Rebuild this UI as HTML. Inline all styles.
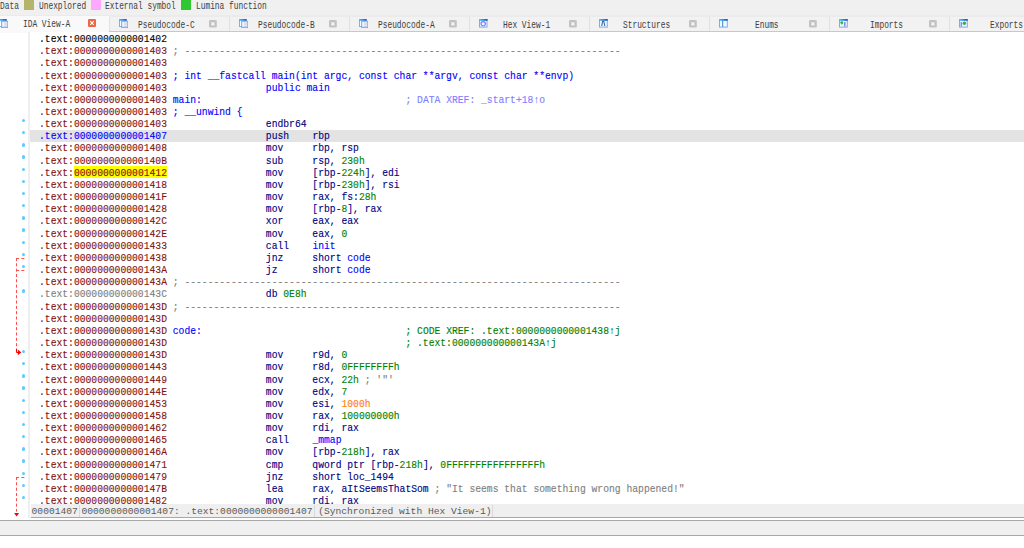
<!DOCTYPE html>
<html><head><meta charset="utf-8"><style>
html,body{margin:0;padding:0}
body{width:1024px;height:548px;overflow:hidden;position:relative;background:#fff;font-family:"Liberation Mono",monospace}
.abs{position:absolute}
#legend{position:absolute;left:0;top:0;width:1024px;height:15px;background:#f0f0f0}
.lt{position:absolute;top:0.5px;font-size:10.4px;line-height:10px;color:#404040;white-space:pre;transform-origin:0 0;transform:scaleX(0.7564)}
.sq{position:absolute;top:-1px;height:11px;width:10px}
#tabs{position:absolute;left:0;top:15px;width:1024px;height:17px;background:linear-gradient(#ebebeb 0,#ebebeb 2px,#f2f2f2 2px)}
#tabline{position:absolute;left:109px;top:31px;width:915px;height:1px;background:#c8c8c8}
.tab{position:absolute;top:16px;height:15px;width:120px}
.tsep{position:absolute;top:17px;height:14px;width:1px;background:#e2e2e2}
.tt{position:absolute;top:19.5px;font-size:10.4px;line-height:10px;color:#404040;white-space:pre;transform-origin:0 0;transform:scaleX(0.7564)}
.ico{position:absolute;top:19.5px;width:8px;height:8px}
.cls{position:absolute;top:21px;width:7px;height:7px;background:#c8c8c8}
#code{position:absolute;left:30.25px;top:32px;width:994px;height:472px;background:#fff;overflow:hidden}
#strip{position:absolute;left:28.1px;top:32px;width:2.2px;height:486px;background:#efefef}
.r{position:absolute;left:8.75px;font-size:10.5px;line-height:12.16px;white-space:pre;height:12.16px;transform-origin:0 0;transform:scaleX(0.9230);-webkit-text-stroke:0.12px currentColor}
#hl{position:absolute;left:0;top:97.50px;width:994px;height:12px;background:#e3e3e3}
.dot{position:absolute;left:22.2px;width:3.3px;height:3.3px;border-radius:50%;background:#5ccbff}
#status{position:absolute;left:31px;top:504px;width:993px;height:13px;background:#efefef}
.st{position:absolute;top:504.8px;font-size:9.63px;line-height:13px;color:#5a5a5a;white-space:pre}
</style></head><body>
<div id="legend"></div>
<div class="lt" style="left:0px">Data</div>
<div class="sq" style="left:24px;background:#b4b46c"></div>
<div class="lt" style="left:38.7px">Unexplored</div>
<div class="sq" style="left:91px;background:#ffa8ff"></div>
<div class="lt" style="left:105.3px">External symbol</div>
<div class="sq" style="left:181px;background:#30c830"></div>
<div class="lt" style="left:195.8px">Lumina function</div>
<div id="tabs"></div>
<div id="tabline"></div>
<div class="tab" style="left:-10.8px;background:#f9f9f9;height:17px"></div>
<svg class="abs" style="left:-1.1px;top:19.3px" width="9" height="9" viewBox="0 0 9 9"><defs><linearGradient id="g0" x1="0" x2="1" y1="0" y2="0"><stop offset="0" stop-color="#3cd0f8"/><stop offset="1" stop-color="#1f48d0"/></linearGradient></defs><rect x="0.5" y="0.5" width="6.8" height="7" fill="#e8f6ff" stroke="#7eaef0" stroke-width="1"/><rect x="0" y="0" width="7.5" height="1.8" fill="url(#g0)"/><rect x="1.2" y="2" width="1" height="5" fill="#fff"/><rect x="2.6" y="2.2" width="6.2" height="6.4" fill="#c9d6ea" stroke="#8aa3c8" stroke-width="0.8"/><rect x="3.6" y="3.2" width="1.2" height="4.2" fill="#fff"/><rect x="5.2" y="3.4" width="2.6" height="1.1" fill="#e8f0ff"/><rect x="5.2" y="5.6" width="2.6" height="1.1" fill="#e8f0ff"/></svg>
<div class="tt" style="left:23.1px;top:18.7px">IDA View-A</div>
<svg class="abs" style="left:88.1px;top:19px" width="8" height="8" viewBox="0 0 8 8"><rect x="0" y="0" width="8" height="8" rx="1.2" fill="#e9683f"/><path d="M2.2 2.2 L5.8 5.8 M5.8 2.2 L2.2 5.8" stroke="#fff" stroke-width="1.1"/></svg>
<div class="tsep" style="left:109.2px"></div>
<svg class="abs" style="left:118.9px;top:19.3px" width="9" height="9" viewBox="0 0 9 9"><defs><linearGradient id="g1" x1="0" x2="1" y1="0" y2="0"><stop offset="0" stop-color="#3cd0f8"/><stop offset="1" stop-color="#1f48d0"/></linearGradient></defs><rect x="0.5" y="0.5" width="6.8" height="7" fill="#e8f6ff" stroke="#7eaef0" stroke-width="1"/><rect x="0" y="0" width="7.5" height="1.8" fill="url(#g1)"/><rect x="1.2" y="2" width="1" height="5" fill="#fff"/><rect x="2.6" y="2.2" width="6.2" height="6.4" fill="#c9d6ea" stroke="#8aa3c8" stroke-width="0.8"/><rect x="3.6" y="3.2" width="1.2" height="4.2" fill="#fff"/><rect x="5.2" y="3.4" width="2.6" height="1.1" fill="#e8f0ff"/><rect x="5.2" y="5.6" width="2.6" height="1.1" fill="#e8f0ff"/></svg>
<div class="tt" style="left:138.4px">Pseudocode-C</div>
<svg class="abs" style="left:209.1px;top:20.3px" width="7.8" height="7.6" viewBox="0 0 7.8 7.6"><rect x="0" y="0" width="7.8" height="7.6" rx="1.4" fill="#c2c2c2"/><path d="M2.4 2.3 L5.4 5.3 M5.4 2.3 L2.4 5.3" stroke="#fff" stroke-width="1.1"/></svg>
<div class="tsep" style="left:229.2px"></div>
<svg class="abs" style="left:238.9px;top:19.3px" width="9" height="9" viewBox="0 0 9 9"><defs><linearGradient id="g2" x1="0" x2="1" y1="0" y2="0"><stop offset="0" stop-color="#3cd0f8"/><stop offset="1" stop-color="#1f48d0"/></linearGradient></defs><rect x="0.5" y="0.5" width="6.8" height="7" fill="#e8f6ff" stroke="#7eaef0" stroke-width="1"/><rect x="0" y="0" width="7.5" height="1.8" fill="url(#g2)"/><rect x="1.2" y="2" width="1" height="5" fill="#fff"/><rect x="2.6" y="2.2" width="6.2" height="6.4" fill="#c9d6ea" stroke="#8aa3c8" stroke-width="0.8"/><rect x="3.6" y="3.2" width="1.2" height="4.2" fill="#fff"/><rect x="5.2" y="3.4" width="2.6" height="1.1" fill="#e8f0ff"/><rect x="5.2" y="5.6" width="2.6" height="1.1" fill="#e8f0ff"/></svg>
<div class="tt" style="left:258.4px">Pseudocode-B</div>
<svg class="abs" style="left:329.1px;top:20.3px" width="7.8" height="7.6" viewBox="0 0 7.8 7.6"><rect x="0" y="0" width="7.8" height="7.6" rx="1.4" fill="#c2c2c2"/><path d="M2.4 2.3 L5.4 5.3 M5.4 2.3 L2.4 5.3" stroke="#fff" stroke-width="1.1"/></svg>
<div class="tsep" style="left:349.2px"></div>
<svg class="abs" style="left:358.9px;top:19.3px" width="9" height="9" viewBox="0 0 9 9"><defs><linearGradient id="g3" x1="0" x2="1" y1="0" y2="0"><stop offset="0" stop-color="#3cd0f8"/><stop offset="1" stop-color="#1f48d0"/></linearGradient></defs><rect x="0.5" y="0.5" width="6.8" height="7" fill="#e8f6ff" stroke="#7eaef0" stroke-width="1"/><rect x="0" y="0" width="7.5" height="1.8" fill="url(#g3)"/><rect x="1.2" y="2" width="1" height="5" fill="#fff"/><rect x="2.6" y="2.2" width="6.2" height="6.4" fill="#c9d6ea" stroke="#8aa3c8" stroke-width="0.8"/><rect x="3.6" y="3.2" width="1.2" height="4.2" fill="#fff"/><rect x="5.2" y="3.4" width="2.6" height="1.1" fill="#e8f0ff"/><rect x="5.2" y="5.6" width="2.6" height="1.1" fill="#e8f0ff"/></svg>
<div class="tt" style="left:378.4px">Pseudocode-A</div>
<svg class="abs" style="left:449.1px;top:20.3px" width="7.8" height="7.6" viewBox="0 0 7.8 7.6"><rect x="0" y="0" width="7.8" height="7.6" rx="1.4" fill="#c2c2c2"/><path d="M2.4 2.3 L5.4 5.3 M5.4 2.3 L2.4 5.3" stroke="#fff" stroke-width="1.1"/></svg>
<div class="tsep" style="left:469.2px"></div>
<svg class="abs" style="left:478.9px;top:19.3px" width="9" height="9" viewBox="0 0 9 9"><defs><linearGradient id="g4" x1="0" x2="1" y1="0" y2="0"><stop offset="0" stop-color="#3cd0f8"/><stop offset="1" stop-color="#1f48d0"/></linearGradient></defs><rect x="0.5" y="0.5" width="7.5" height="7.6" fill="#eef8ff" stroke="#86a8ea" stroke-width="1"/><rect x="0" y="0" width="8.5" height="1.8" fill="url(#g4)"/><circle cx="4.2" cy="4.8" r="2.2" fill="none" stroke="#7a7af8" stroke-width="1.2"/></svg>
<div class="tt" style="left:503.1px">Hex View-1</div>
<svg class="abs" style="left:569.1px;top:20.3px" width="7.8" height="7.6" viewBox="0 0 7.8 7.6"><rect x="0" y="0" width="7.8" height="7.6" rx="1.4" fill="#c2c2c2"/><path d="M2.4 2.3 L5.4 5.3 M5.4 2.3 L2.4 5.3" stroke="#fff" stroke-width="1.1"/></svg>
<div class="tsep" style="left:589.2px"></div>
<svg class="abs" style="left:598.9px;top:19.3px" width="9" height="9" viewBox="0 0 9 9"><defs><linearGradient id="g5" x1="0" x2="1" y1="0" y2="0"><stop offset="0" stop-color="#3cd0f8"/><stop offset="1" stop-color="#1f48d0"/></linearGradient></defs><rect x="0.5" y="0.5" width="7.8" height="7.6" fill="#eef8ff" stroke="#86a8ea" stroke-width="1"/><rect x="0" y="0" width="8.6" height="1.8" fill="url(#g5)"/><path d="M2.7 7 L3.6 2.4 L4.8 2.4 L5.8 7" fill="none" stroke="#3a6aa0" stroke-width="1.1"/></svg>
<div class="tt" style="left:623.1px">Structures</div>
<svg class="abs" style="left:689.1px;top:20.3px" width="7.8" height="7.6" viewBox="0 0 7.8 7.6"><rect x="0" y="0" width="7.8" height="7.6" rx="1.4" fill="#c2c2c2"/><path d="M2.4 2.3 L5.4 5.3 M5.4 2.3 L2.4 5.3" stroke="#fff" stroke-width="1.1"/></svg>
<div class="tsep" style="left:709.2px"></div>
<svg class="abs" style="left:718.9px;top:19.3px" width="9" height="9" viewBox="0 0 9 9"><defs><linearGradient id="g6" x1="0" x2="1" y1="0" y2="0"><stop offset="0" stop-color="#3cd0f8"/><stop offset="1" stop-color="#1f48d0"/></linearGradient></defs><rect x="0.5" y="0.5" width="7.8" height="7.6" fill="#eefaff" stroke="#86a8ea" stroke-width="1"/><rect x="0" y="0" width="8.6" height="1.8" fill="url(#g6)"/><rect x="3.2" y="1.5" width="1" height="6.5" fill="#3a8ad0"/></svg>
<div class="tt" style="left:754.9px">Enums</div>
<svg class="abs" style="left:809.1px;top:20.3px" width="7.8" height="7.6" viewBox="0 0 7.8 7.6"><rect x="0" y="0" width="7.8" height="7.6" rx="1.4" fill="#c2c2c2"/><path d="M2.4 2.3 L5.4 5.3 M5.4 2.3 L2.4 5.3" stroke="#fff" stroke-width="1.1"/></svg>
<div class="tsep" style="left:829.2px"></div>
<svg class="abs" style="left:838.9px;top:19.3px" width="9" height="9" viewBox="0 0 9 9"><defs><linearGradient id="g7" x1="0" x2="1" y1="0" y2="0"><stop offset="0" stop-color="#3cd0f8"/><stop offset="1" stop-color="#1f48d0"/></linearGradient></defs><rect x="0.5" y="0.5" width="7.8" height="7.6" fill="#eef8ff" stroke="#86a8ea" stroke-width="1"/><rect x="0" y="0" width="8.6" height="1.8" fill="url(#g7)"/><rect x="5" y="3" width="1.6" height="4.6" fill="#8a90e0"/><path d="M1.3 2.5 L4.4 5 L2.2 5.6 Z" fill="#2cb83c"/><circle cx="2.8" cy="3.6" r="1.3" fill="#2cb83c"/></svg>
<div class="tt" style="left:870.2px">Imports</div>
<svg class="abs" style="left:929.1px;top:20.3px" width="7.8" height="7.6" viewBox="0 0 7.8 7.6"><rect x="0" y="0" width="7.8" height="7.6" rx="1.4" fill="#c2c2c2"/><path d="M2.4 2.3 L5.4 5.3 M5.4 2.3 L2.4 5.3" stroke="#fff" stroke-width="1.1"/></svg>
<div class="tsep" style="left:949.2px"></div>
<svg class="abs" style="left:959.4px;top:19.3px" width="9" height="9" viewBox="0 0 9 9"><defs><linearGradient id="g8" x1="0" x2="1" y1="0" y2="0"><stop offset="0" stop-color="#3cd0f8"/><stop offset="1" stop-color="#1f48d0"/></linearGradient></defs><rect x="0.5" y="0.5" width="7.8" height="7.6" fill="#eef8ff" stroke="#86a8ea" stroke-width="1"/><rect x="0" y="0" width="8.6" height="1.8" fill="url(#g8)"/><rect x="1.5" y="3" width="1.6" height="4.6" fill="#8a90e0"/><circle cx="5.4" cy="4.2" r="1.7" fill="#2cb83c"/></svg>
<div class="tt" style="left:990.2px">Exports</div>
<svg class="abs" style="left:1049.1px;top:20.3px" width="7.8" height="7.6" viewBox="0 0 7.8 7.6"><rect x="0" y="0" width="7.8" height="7.6" rx="1.4" fill="#c2c2c2"/><path d="M2.4 2.3 L5.4 5.3 M5.4 2.3 L2.4 5.3" stroke="#fff" stroke-width="1.1"/></svg>
<div id="strip"></div>
<div id="code">
<div id="hl"></div>
<div class="abs" style="left:43.85px;top:134.0px;width:92.9px;height:12.2px;background:#ffff00"></div>
<div class="r" style="top:1.04px"><span style="color:#000000">.text:0000000000001402</span></div>
<div class="r" style="top:13.20px"><span style="color:#841212">.text:0000000000001403</span> <span style="color:#808080">; ---------------------------------------------------------------------------</span></div>
<div class="r" style="top:25.36px"><span style="color:#841212">.text:0000000000001403</span></div>
<div class="r" style="top:37.52px"><span style="color:#841212">.text:0000000000001403</span> <span style="color:#0000ff">; int __fastcall main(int argc, const char **argv, const char **envp)</span></div>
<div class="r" style="top:49.68px"><span style="color:#841212">.text:0000000000001403</span>                 <span style="color:#0000ff">public main</span></div>
<div class="r" style="top:61.84px"><span style="color:#841212">.text:0000000000001403</span> <span style="color:#0000ff">main:</span>                                   <span style="color:#8080ff">; DATA XREF: _start+18↑o</span></div>
<div class="r" style="top:74.00px"><span style="color:#841212">.text:0000000000001403</span> <span style="color:#0000ff">; __unwind {</span></div>
<div class="r" style="top:86.16px"><span style="color:#841212">.text:0000000000001403</span>                 <span style="color:#000080">endbr64</span></div>
<div class="r" style="top:98.32px"><span style="color:#0000ff">.text:0000000000001407</span>                 <span style="color:#000080">push</span>    <span style="color:#000080">rbp</span></div>
<div class="r" style="top:110.48px"><span style="color:#841212">.text:0000000000001408</span>                 <span style="color:#000080">mov</span>     <span style="color:#000080">rbp, rsp</span></div>
<div class="r" style="top:122.64px"><span style="color:#841212">.text:000000000000140B</span>                 <span style="color:#000080">sub</span>     <span style="color:#000080">rsp, </span><span style="color:#008000">230h</span></div>
<div class="r" style="top:134.80px"><span style="color:#841212">.text:</span><span style="color:#841212">0000000000001412</span>                 <span style="color:#000080">mov</span>     <span style="color:#000080">[rbp-</span><span style="color:#008000">224h</span><span style="color:#000080">], edi</span></div>
<div class="r" style="top:146.96px"><span style="color:#841212">.text:0000000000001418</span>                 <span style="color:#000080">mov</span>     <span style="color:#000080">[rbp-</span><span style="color:#008000">230h</span><span style="color:#000080">], rsi</span></div>
<div class="r" style="top:159.12px"><span style="color:#841212">.text:000000000000141F</span>                 <span style="color:#000080">mov</span>     <span style="color:#000080">rax, fs:</span><span style="color:#008000">28h</span></div>
<div class="r" style="top:171.28px"><span style="color:#841212">.text:0000000000001428</span>                 <span style="color:#000080">mov</span>     <span style="color:#000080">[rbp-</span><span style="color:#008000">8</span><span style="color:#000080">], rax</span></div>
<div class="r" style="top:183.44px"><span style="color:#841212">.text:000000000000142C</span>                 <span style="color:#000080">xor</span>     <span style="color:#000080">eax, eax</span></div>
<div class="r" style="top:195.60px"><span style="color:#841212">.text:000000000000142E</span>                 <span style="color:#000080">mov</span>     <span style="color:#000080">eax, </span><span style="color:#008000">0</span></div>
<div class="r" style="top:207.76px"><span style="color:#841212">.text:0000000000001433</span>                 <span style="color:#000080">call</span>    <span style="color:#0000ff">init</span></div>
<div class="r" style="top:219.92px"><span style="color:#841212">.text:0000000000001438</span>                 <span style="color:#000080">jnz</span>     <span style="color:#000080">short </span><span style="color:#0000ff">code</span></div>
<div class="r" style="top:232.08px"><span style="color:#841212">.text:000000000000143A</span>                 <span style="color:#000080">jz</span>      <span style="color:#000080">short </span><span style="color:#0000ff">code</span></div>
<div class="r" style="top:244.24px"><span style="color:#841212">.text:000000000000143A</span> <span style="color:#808080">; ---------------------------------------------------------------------------</span></div>
<div class="r" style="top:256.40px"><span style="color:#808080">.text:000000000000143C</span>                 <span style="color:#000080">db </span><span style="color:#008000">0E8h</span></div>
<div class="r" style="top:268.56px"><span style="color:#841212">.text:000000000000143D</span> <span style="color:#808080">; ---------------------------------------------------------------------------</span></div>
<div class="r" style="top:280.72px"><span style="color:#841212">.text:000000000000143D</span></div>
<div class="r" style="top:292.88px"><span style="color:#841212">.text:000000000000143D</span> <span style="color:#0000ff">code:</span>                                   <span style="color:#008000">; CODE XREF: .text:0000000000001438↑j</span></div>
<div class="r" style="top:305.04px"><span style="color:#841212">.text:000000000000143D</span>                                         <span style="color:#008000">; .text:000000000000143A↑j</span></div>
<div class="r" style="top:317.20px"><span style="color:#841212">.text:000000000000143D</span>                 <span style="color:#000080">mov</span>     <span style="color:#000080">r9d, </span><span style="color:#008000">0</span></div>
<div class="r" style="top:329.36px"><span style="color:#841212">.text:0000000000001443</span>                 <span style="color:#000080">mov</span>     <span style="color:#000080">r8d, </span><span style="color:#008000">0FFFFFFFFh</span></div>
<div class="r" style="top:341.52px"><span style="color:#841212">.text:0000000000001449</span>                 <span style="color:#000080">mov</span>     <span style="color:#000080">ecx, </span><span style="color:#008000">22h</span><span style="color:#808080"> ; '"'</span></div>
<div class="r" style="top:353.68px"><span style="color:#841212">.text:000000000000144E</span>                 <span style="color:#000080">mov</span>     <span style="color:#000080">edx, </span><span style="color:#008000">7</span></div>
<div class="r" style="top:365.84px"><span style="color:#841212">.text:0000000000001453</span>                 <span style="color:#000080">mov</span>     <span style="color:#000080">esi, </span><span style="color:#ff8000">1000h</span></div>
<div class="r" style="top:378.00px"><span style="color:#841212">.text:0000000000001458</span>                 <span style="color:#000080">mov</span>     <span style="color:#000080">rax, </span><span style="color:#008000">100000000h</span></div>
<div class="r" style="top:390.16px"><span style="color:#841212">.text:0000000000001462</span>                 <span style="color:#000080">mov</span>     <span style="color:#000080">rdi, rax</span></div>
<div class="r" style="top:402.32px"><span style="color:#841212">.text:0000000000001465</span>                 <span style="color:#000080">call</span>    <span style="color:#0000ff">_mmap</span></div>
<div class="r" style="top:414.48px"><span style="color:#841212">.text:000000000000146A</span>                 <span style="color:#000080">mov</span>     <span style="color:#000080">[rbp-</span><span style="color:#008000">218h</span><span style="color:#000080">], rax</span></div>
<div class="r" style="top:426.64px"><span style="color:#841212">.text:0000000000001471</span>                 <span style="color:#000080">cmp</span>     <span style="color:#000080">qword ptr [rbp-</span><span style="color:#008000">218h</span><span style="color:#000080">], </span><span style="color:#008000">0FFFFFFFFFFFFFFFFh</span></div>
<div class="r" style="top:438.80px"><span style="color:#841212">.text:0000000000001479</span>                 <span style="color:#000080">jnz</span>     <span style="color:#000080">short loc_1494</span></div>
<div class="r" style="top:450.96px"><span style="color:#841212">.text:000000000000147B</span>                 <span style="color:#000080">lea</span>     <span style="color:#000080">rax, aItSeemsThatSom</span><span style="color:#808080"> ; "It seems that something wrong happened!"</span></div>
<div class="r" style="top:463.12px"><span style="color:#841212">.text:0000000000001482</span>                 <span style="color:#000080">mov</span>     <span style="color:#000080">rdi, rax</span></div>
</div>
<svg class="abs" style="left:0;top:0" width="28" height="548" viewBox="0 0 28 548">
<g stroke="#ff4c4c" stroke-width="1" fill="none" stroke-dasharray="3.04 2.28">
<path d="M16.5 258 V349"/>
<path d="M16 258.5 H24.8"/>
<path d="M16 270.5 H24.8"/>
<path d="M16.5 477 V511.6"/>
<path d="M16 477.5 H24.8"/>
</g>
<path d="M16.5 349 V352.5 H18.5" stroke="#ff0000" stroke-width="1" fill="none"/>
<path d="M17.8 349.6 L21.3 352.4 L17.8 355.2 Z" fill="#ff0000"/>
<path d="M14.1 513 H19.1 L16.6 516.4 Z" fill="#ff0000"/>
</svg>
<div class="dot" style="top:118.97px"></div>
<div class="dot" style="top:131.13px"></div>
<div class="dot" style="top:143.29px"></div>
<div class="dot" style="top:155.45px"></div>
<div class="dot" style="top:167.61px"></div>
<div class="dot" style="top:179.77px"></div>
<div class="dot" style="top:191.93px"></div>
<div class="dot" style="top:204.09px"></div>
<div class="dot" style="top:216.25px"></div>
<div class="dot" style="top:228.41px"></div>
<div class="dot" style="top:240.57px"></div>
<div class="dot" style="top:252.73px"></div>
<div class="dot" style="top:264.89px"></div>
<div class="dot" style="top:289.21px"></div>
<div class="dot" style="top:350.01px"></div>
<div class="dot" style="top:362.17px"></div>
<div class="dot" style="top:374.33px"></div>
<div class="dot" style="top:386.49px"></div>
<div class="dot" style="top:398.65px"></div>
<div class="dot" style="top:410.81px"></div>
<div class="dot" style="top:422.97px"></div>
<div class="dot" style="top:435.13px"></div>
<div class="dot" style="top:447.29px"></div>
<div class="dot" style="top:459.45px"></div>
<div class="dot" style="top:471.61px"></div>
<div class="dot" style="top:483.77px"></div>
<div class="dot" style="top:495.93px"></div>
<div id="status"></div>
<div class="st" style="left:31.6px">00001407</div>
<div class="abs" style="left:79.3px;top:505px;width:1px;height:12px;background:#dadada"></div>
<div class="st" style="left:81.5px">0000000000001407: .text:0000000000001407</div>
<div class="abs" style="left:314.3px;top:505px;width:1px;height:12px;background:#dadada"></div>
<div class="st" style="left:318.2px">(Synchronized with Hex View-1)</div>
<div class="abs" style="left:492.3px;top:505px;width:1px;height:12px;background:#dadada"></div>
<div class="abs" style="left:31px;top:517px;width:993px;height:1px;background:#a8a8a8"></div>
<div class="abs" style="left:0;top:520px;width:1024px;height:1px;background:#a8a8a8"></div>
<div class="abs" style="left:0;top:521px;width:1024px;height:14px;background:#f0f0f0"></div>
<div class="abs" style="left:0;top:535px;width:1024px;height:1px;background:#a8a8a8"></div>
</body></html>
